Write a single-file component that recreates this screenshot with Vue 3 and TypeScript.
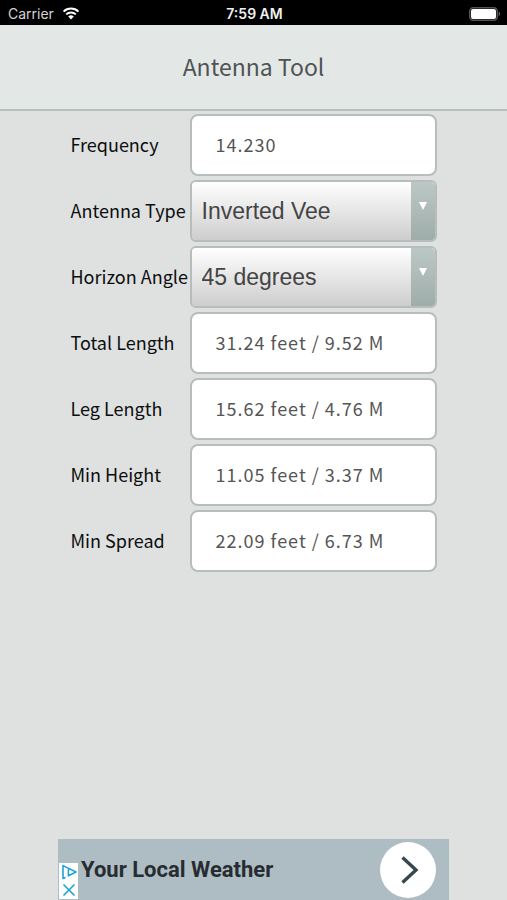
<script setup lang="ts">
import { computed, ref } from 'vue'

const FEET_TO_METERS = 0.3048

const frequency = ref('14.230')
const antennaType = ref('Inverted Vee')
const angle = ref(45)

const antennaTypes = ['Inverted Vee', 'Dipole']
const angles = [30, 45, 60]

const totalFeet = computed(() => {
  const mhz = Number(frequency.value)
  if (!(mhz > 0)) return 0
  const factor = antennaType.value === 'Inverted Vee' ? 0.95 : 1
  return (468 / mhz) * factor
})

const format = (feet: number): string =>
  `${feet.toFixed(2)} feet / ${(feet * FEET_TO_METERS).toFixed(2)} M`

const results = computed(() => {
  const total = totalFeet.value
  const radians = (angle.value * Math.PI) / 180
  return [
    { id: 'total-length', label: 'Total Length', value: format(total) },
    { id: 'leg-length', label: 'Leg Length', value: format(total / 2) },
    { id: 'min-height', label: 'Min Height', value: format((total / 2) * Math.sin(radians)) },
    { id: 'min-spread', label: 'Min Spread', value: format(total * Math.cos(radians)) },
  ]
})

const adVisible = ref(true)
</script>

<template>
  <div class="screen">
    <div class="status">
      <div class="carrier">
        <span>Carrier</span>
        <svg class="wifi" viewBox="0 0 18 13" aria-hidden="true">
          <path d="M1.6 4.6a10.6 10.6 0 0 1 14.8 0" />
          <path d="M4.2 7.4a6.9 6.9 0 0 1 9.6 0" />
          <path class="dot" d="M6.2 9.6a4 4 0 0 1 5.6 0L9 12.5z" />
        </svg>
      </div>
      <span class="time">7:59 AM</span>
      <svg class="battery" viewBox="0 0 32 14" aria-hidden="true">
        <rect class="shell" x="0.75" y="0.75" width="27.5" height="12.5" rx="3.5" />
        <rect class="charge" x="2" y="2" width="25" height="10" rx="2" />
        <path class="tip" d="M29.7 4.8c1.8.6 1.8 3.8 0 4.4z" />
      </svg>
    </div>

    <header class="header">
      <h1>Antenna Tool</h1>
    </header>

    <main class="content">
      <form class="form" @submit.prevent>
        <label for="frequency">Frequency</label>
        <input id="frequency" v-model="frequency" class="field" type="text" inputmode="decimal" />

        <label for="antenna-type">Antenna Type</label>
        <div class="picker">
          <select id="antenna-type" v-model="antennaType">
            <option v-for="t in antennaTypes" :key="t" :value="t">{{ t }}</option>
          </select>
          <svg class="arrow" viewBox="0 0 8 8" aria-hidden="true"><path d="M0 0h8L4 8z" /></svg>
        </div>

        <label for="horizon-angle">Horizon Angle</label>
        <div class="picker">
          <select id="horizon-angle" v-model="angle">
            <option v-for="a in angles" :key="a" :value="a">{{ a }} degrees</option>
          </select>
          <svg class="arrow" viewBox="0 0 8 8" aria-hidden="true"><path d="M0 0h8L4 8z" /></svg>
        </div>

        <template v-for="r in results" :key="r.id">
          <label :for="r.id">{{ r.label }}</label>
          <input :id="r.id" class="field" type="text" readonly :value="r.value" />
        </template>
      </form>
    </main>

    <aside v-if="adVisible" class="ad">
      <div class="choices">
        <a href="#" aria-label="AdChoices">
          <svg viewBox="0 0 16 16" aria-hidden="true">
            <path d="M4.6 13.4l-2.6 1V1.6L15 8 7.4 11.8V5.2" />
          </svg>
        </a>
        <button type="button" aria-label="Close ad" @click="adVisible = false">
          <svg viewBox="0 0 16 16" aria-hidden="true"><path d="M2.5 2.5l11 11M13.5 2.5l-11 11" /></svg>
        </button>
      </div>
      <a class="headline" href="#">Your Local Weather</a>
      <a class="go" href="#" aria-label="Open">
        <svg viewBox="0 0 56 56" aria-hidden="true"><path d="M22.5 15.5L36 28 22.5 40.5" /></svg>
      </a>
    </aside>
  </div>
</template>

<style>
body {
  margin: 0;
  background: #dfe1e1;
}
</style>

<style scoped>
.screen {
  display: flex;
  flex-direction: column;
  min-height: 100vh;
  background: #dfe1e1;
  font-family: "Noto Sans CJK SC", "Noto Sans", sans-serif;
}

.status {
  display: grid;
  grid-template-columns: 1fr auto 1fr;
  align-items: center;
  height: 25px;
  padding: 2px 6px 0 8px;
  box-sizing: border-box;
  background: #000;
  color: #fff;
  font: 14px/20px Inter, Roboto, sans-serif;
}

.carrier {
  display: flex;
  align-items: center;
  gap: 8px;
  color: #d4d4d4;
}

.wifi {
  width: 18px;
  height: 13px;
  fill: none;
  stroke: #fff;
  stroke-width: 2;
}

.wifi .dot {
  fill: #fff;
  stroke: none;
}

.time {
  font-weight: 600;
  color: #f0f0f0;
}

.battery {
  justify-self: end;
  width: 32px;
  height: 14px;
}

.shell {
  fill: none;
  stroke: #555;
  stroke-width: 1.5;
}

.charge {
  fill: #fff;
}

.tip {
  fill: #666;
}

.header {
  display: flex;
  align-items: center;
  justify-content: center;
  height: 84px;
  background: #e3e8e7;
  border-bottom: 2px solid #b8c0bf;
}

h1 {
  margin: 0;
  padding-bottom: 2px;
  font-size: 23px;
  line-height: 36px;
  font-weight: 400;
  color: #4f5353;
}

.content {
  flex: 1;
  padding: 3px 24px 24px;
}

.form {
  display: grid;
  grid-template-columns: 119px 247px;
  grid-auto-rows: 62px;
  row-gap: 4px;
  align-items: center;
  justify-content: center;
}

label {
  padding-bottom: 2px;
  font-size: 18px;
  line-height: 28px;
  white-space: nowrap;
  color: #0c0e0e;
}

.field,
.picker {
  width: 100%;
  height: 100%;
  box-sizing: border-box;
  border: 2px solid #b6bdbc;
}

.field {
  margin: 0;
  padding: 0 24px 2px;
  border-radius: 8px;
  background: #fff;
  color: #555;
  font-family: inherit;
  font-size: 18px;
  letter-spacing: 1px;
  outline: none;
}

.picker {
  position: relative;
  border-radius: 6px;
  overflow: hidden;
}

select {
  appearance: none;
  display: block;
  width: 100%;
  height: 100%;
  margin: 0;
  padding: 0 36px 0 10px;
  border: 0;
  border-radius: 0;
  background:
    linear-gradient(#bcc8c6, #9eacaa) right / 24px 100% no-repeat,
    linear-gradient(#fff, #cdcdcd);
  color: #444;
  font: 23px "Liberation Sans", Arial, sans-serif;
  outline: none;
}

.arrow {
  position: absolute;
  top: 20px;
  right: 8px;
  width: 8px;
  height: 8px;
  fill: #fff;
  pointer-events: none;
}

.ad {
  display: flex;
  align-items: center;
  align-self: center;
  width: 391px;
  max-width: 100%;
  height: 61px;
  box-sizing: border-box;
  padding-right: 13px;
  background: #aebcc3;
}

.choices {
  display: flex;
  flex-direction: column;
  align-self: flex-end;
  width: 19px;
  margin: 0 3px 1px 1px;
  background: #fff;
}

.choices a,
.choices button {
  display: grid;
  place-items: center;
  height: 18px;
  padding: 0;
  border: 0;
  background: none;
}

.choices svg {
  width: 16px;
  height: 16px;
  fill: none;
  stroke: #1fa5cf;
  stroke-width: 1.6;
  stroke-linejoin: round;
}

.headline {
  flex: 1;
  color: #262c31;
  font: 700 22px/28px Roboto, sans-serif;
  text-decoration: none;
}

.go {
  width: 56px;
  height: 56px;
  border-radius: 50%;
  background: #fff;
}

.go svg {
  display: block;
  fill: none;
  stroke: #36474f;
  stroke-width: 3.4;
}
</style>
